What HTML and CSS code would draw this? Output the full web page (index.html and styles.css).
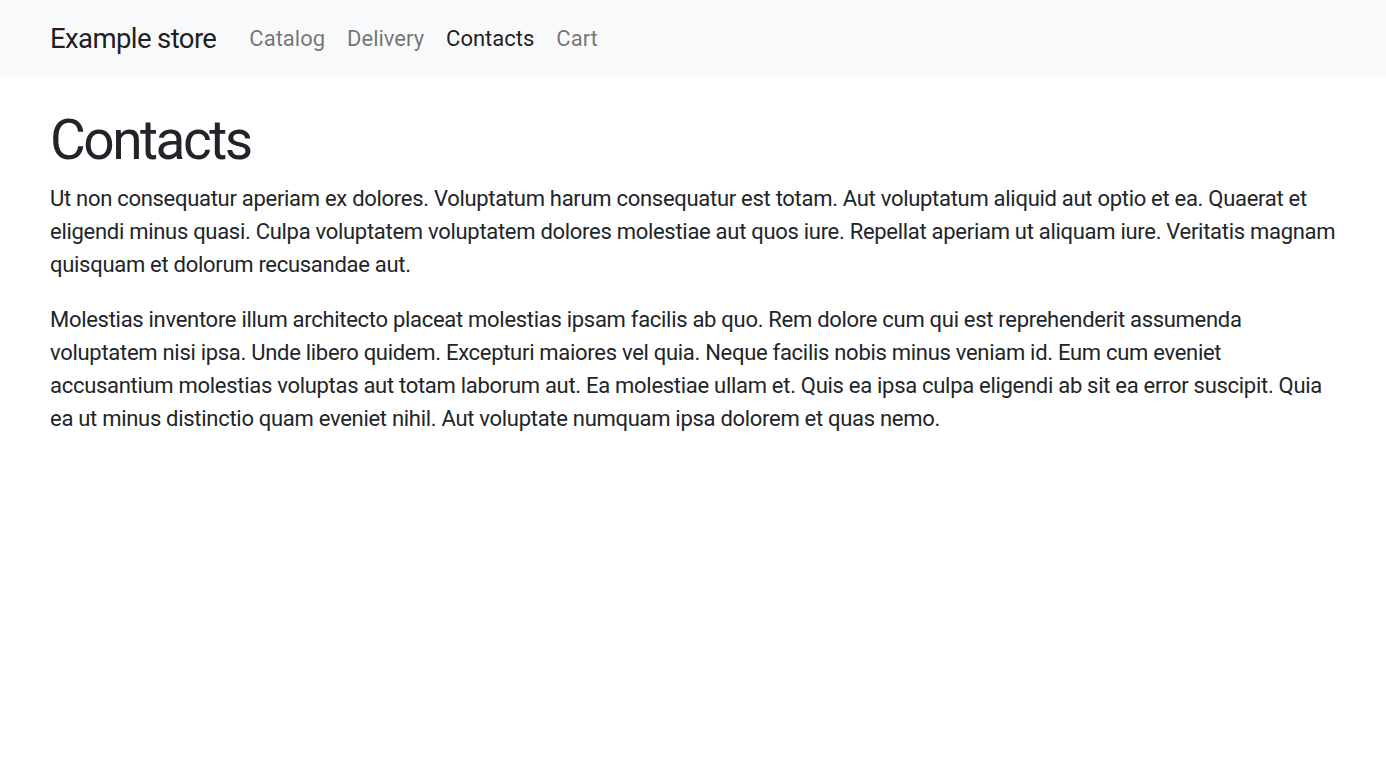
FILE: index.html
```html
<!DOCTYPE html>
<html lang="en">
<head>
<meta charset="utf-8">
<title>Contacts - Example store</title>
<link rel="stylesheet" href="styles.css">
</head>
<body>
<nav class="navbar">
  <a class="brand" href="#">Example store</a>
  <ul class="nav">
    <li><a class="nav-link" href="#">Catalog</a></li>
    <li><a class="nav-link" href="#">Delivery</a></li>
    <li><a class="nav-link active" href="#">Contacts</a></li>
    <li><a class="nav-link" href="#">Cart</a></li>
  </ul>
</nav>
<main class="content">
  <h1 class="title">Contacts</h1>
  <p>Ut non consequatur aperiam ex dolores. Voluptatum harum consequatur est totam. Aut voluptatum aliquid aut optio et ea. Quaerat et eligendi minus quasi. Culpa voluptatem voluptatem dolores molestiae aut quos iure. Repellat aperiam ut aliquam iure. Veritatis magnam quisquam et dolorum recusandae aut.</p>
  <p>Molestias inventore illum architecto placeat molestias ipsam facilis ab quo. Rem dolore cum qui est reprehenderit assumenda voluptatem nisi ipsa. Unde libero quidem. Excepturi maiores vel quia. Neque facilis nobis minus veniam id. Eum cum eveniet accusantium molestias voluptas aut totam laborum aut. Ea molestiae ullam et. Quis ea ipsa culpa eligendi ab sit ea error suscipit. Quia ea ut minus distinctio quam eveniet nihil. Aut voluptate numquam ipsa dolorem et quas nemo.</p>
</main>
</body>
</html>
```
FILE: styles.css
```css
* { box-sizing: border-box; }
html { font-size: 22px; }
body {
  margin: 0;
  font-family: Roboto, "Open Sans", sans-serif;
  font-size: 1rem;
  line-height: 1.5;
  color: #212529;
  background: #fff;
}
.navbar {
  display: flex;
  align-items: center;
  background: #f8f9fa;
  padding: 11px 50px;
}
.brand {
  font-size: 27.5px;
  line-height: 1.5;
  letter-spacing: -0.6px;
  color: rgba(0,0,0,.9);
  text-decoration: none;
  margin-right: 22px;
  padding: 4px 0;
}
.nav {
  display: flex;
  list-style: none;
  margin: 0;
  padding: 0;
}
.nav-link {
  display: block;
  padding: 11px 11px;
  color: rgba(0,0,0,.55);
  text-decoration: none;
}
.nav-link.active { color: rgba(0,0,0,.9); }
.content {
  padding: 30px 50px 0;
}
.title {
  margin: 0 0 9px;
  font-size: 55px;
  font-weight: 400;
  line-height: 1.2;
  letter-spacing: -2.5px;
}
p {
  margin: 0 0 22px;
  letter-spacing: -0.29px;
}
```
